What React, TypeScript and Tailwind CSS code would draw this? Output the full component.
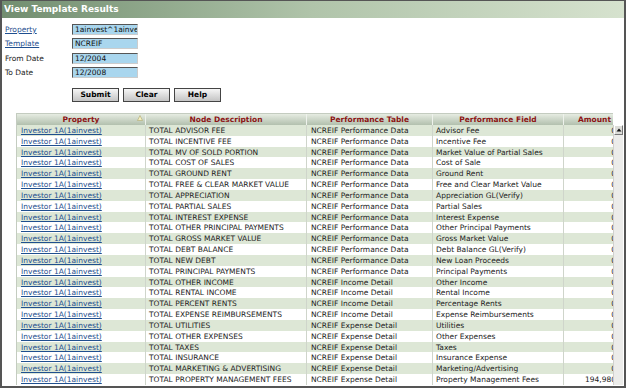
import { ReactNode } from "react";

type Row = {
  node: string;
  table: string;
  field: string;
  amount: string;
};

const rows: Row[] = [
  { node: "TOTAL ADVISOR FEE", table: "NCREIF Performance Data", field: "Advisor Fee", amount: "0" },
  { node: "TOTAL INCENTIVE FEE", table: "NCREIF Performance Data", field: "Incentive Fee", amount: "0" },
  { node: "TOTAL MV OF SOLD PORTION", table: "NCREIF Performance Data", field: "Market Value of Partial Sales", amount: "0" },
  { node: "TOTAL COST OF SALES", table: "NCREIF Performance Data", field: "Cost of Sale", amount: "0" },
  { node: "TOTAL GROUND RENT", table: "NCREIF Performance Data", field: "Ground Rent", amount: "0" },
  { node: "TOTAL FREE & CLEAR MARKET VALUE", table: "NCREIF Performance Data", field: "Free and Clear Market Value", amount: "0" },
  { node: "TOTAL APPRECIATION", table: "NCREIF Performance Data", field: "Appreciation GL(Verify)", amount: "0" },
  { node: "TOTAL PARTIAL SALES", table: "NCREIF Performance Data", field: "Partial Sales", amount: "0" },
  { node: "TOTAL INTEREST EXPENSE", table: "NCREIF Performance Data", field: "Interest Expense", amount: "0" },
  { node: "TOTAL OTHER PRINCIPAL PAYMENTS", table: "NCREIF Performance Data", field: "Other Principal Payments", amount: "0" },
  { node: "TOTAL GROSS MARKET VALUE", table: "NCREIF Performance Data", field: "Gross Market Value", amount: "0" },
  { node: "TOTAL DEBT BALANCE", table: "NCREIF Performance Data", field: "Debt Balance GL(Verify)", amount: "0" },
  { node: "TOTAL NEW DEBT", table: "NCREIF Performance Data", field: "New Loan Proceeds", amount: "0" },
  { node: "TOTAL PRINCIPAL PAYMENTS", table: "NCREIF Performance Data", field: "Principal Payments", amount: "0" },
  { node: "TOTAL OTHER INCOME", table: "NCREIF Income Detail", field: "Other Income", amount: "0" },
  { node: "TOTAL RENTAL INCOME", table: "NCREIF Income Detail", field: "Rental Income", amount: "0" },
  { node: "TOTAL PERCENT RENTS", table: "NCREIF Income Detail", field: "Percentage Rents", amount: "0" },
  { node: "TOTAL EXPENSE REIMBURSEMENTS", table: "NCREIF Income Detail", field: "Expense Reimbursements", amount: "0" },
  { node: "TOTAL UTILITIES", table: "NCREIF Expense Detail", field: "Utilities", amount: "0" },
  { node: "TOTAL OTHER EXPENSES", table: "NCREIF Expense Detail", field: "Other Expenses", amount: "0" },
  { node: "TOTAL TAXES", table: "NCREIF Expense Detail", field: "Taxes", amount: "0" },
  { node: "TOTAL INSURANCE", table: "NCREIF Expense Detail", field: "Insurance Expense", amount: "0" },
  { node: "TOTAL MARKETING & ADVERTISING", table: "NCREIF Expense Detail", field: "Marketing/Advertising", amount: "0" },
  { node: "TOTAL PROPERTY MANAGEMENT FEES", table: "NCREIF Expense Detail", field: "Property Management Fees", amount: "194,980" },
];

const cols = "grid grid-cols-[129px_161px_126px_131px_65px]";

const FormRow = ({ label, value, link }: { label: string; value: string; link?: boolean }) => (
  <div className="flex items-center h-[14.5px]">
    <div className="w-[67px]">
      {link ? (
        <a href="#" className="text-[#1f4f8f] underline">
          {label}
        </a>
      ) : (
        <span className="text-[#222]">{label}</span>
      )}
    </div>
    <div className="w-[66px] h-[11px] bg-[#a9d6ee] border-t border-l border-[#555] border-r border-b border-r-[#ccc] border-b-[#ccc] flex items-center pl-[2px] overflow-hidden whitespace-nowrap leading-none text-[#111]">
      {value}
    </div>
  </div>
);

const Btn = ({ children }: { children: ReactNode }) => (
  <button className="w-[47px] h-[14px] border border-[#444] bg-gradient-to-b from-[#f6f6f6] to-[#c4c4c4] font-bold text-[7.5px] text-black leading-none">
    {children}
  </button>
);

const HeadCell = ({ children, last }: { children: ReactNode; last?: boolean }) => (
  <div
    className={`flex items-center justify-center font-bold text-[#8c1414] ${
      last ? "" : "border-r border-[#eef2ec]"
    }`}
  >
    {children}
  </div>
);

export default function App() {
  return (
    <div className="w-[627px] h-[389px] bg-white font-['DejaVu_Sans',sans-serif] text-[7.5px] overflow-hidden">
      <div className="w-[626px] h-[388px] border-t border-l-2 border-r-2 border-b-2 border-[#555] flex flex-col overflow-hidden">
        {/* Title bar */}
        <div className="h-[17px] shrink-0 bg-gradient-to-r from-[#728e70] via-[#b0c4aa] to-[#d6e2ce] flex items-center pl-[2px]">
          <span className="text-white font-bold text-[9px] leading-none">View Template Results</span>
        </div>

        {/* Filters */}
        <div className="pl-[3px] pt-[4px] flex flex-col">
          <FormRow label="Property" value="1ainvest^1ainvest" link />
          <FormRow label="Template" value="NCREIF" link />
          <FormRow label="From Date" value="12/2004" />
          <FormRow label="To Date" value="12/2008" />
          <div className="flex gap-[4px] ml-[67px] mt-[8px]">
            <Btn>Submit</Btn>
            <Btn>Clear</Btn>
            <Btn>Help</Btn>
          </div>
        </div>

        {/* Results */}
        <div className="ml-[14px] mt-[11px] flex">
          <div className="w-[597px] overflow-hidden border-l border-[#c4ccc0]">
            <div className={`${cols} h-[12px] bg-gradient-to-b from-[#e6ece2] to-[#b2c0ae] border-t border-[#c4ccc0]`}>
              <HeadCell>
                <div className="relative w-full flex justify-center">
                  Property
                  <svg className="absolute right-[2px] top-[1px]" width="6" height="6" viewBox="0 0 6 6">
                    <path d="M3 0.5 L5.5 5.5 L0.5 5.5 Z" fill="#f4f0c0" stroke="#b0a870" strokeWidth="0.6" />
                  </svg>
                </div>
              </HeadCell>
              <HeadCell>Node Description</HeadCell>
              <HeadCell>Performance Table</HeadCell>
              <HeadCell>Performance Field</HeadCell>
              <div className="flex items-center pl-[14px] font-bold text-[#8c1414] whitespace-nowrap">Amount</div>
            </div>
            {rows.map((r, i) => (
              <div
                key={i}
                className={`${cols} h-[10.83px] items-center text-[#222] ${
                  i % 2 === 0 ? "bg-[#dde7d6]" : "bg-white"
                }`}
              >
                <div className="pl-[4px] h-full flex items-center border-r border-[#cfd5cb] whitespace-nowrap">
                  <a href="#" className="text-[#1f4f8f] underline">
                    Investor 1A(1ainvest)
                  </a>
                </div>
                <div className="pl-[3px] h-full flex items-center border-r border-[#cfd5cb] whitespace-nowrap overflow-hidden">
                  {r.node}
                </div>
                <div className="pl-[4px] h-full flex items-center border-r border-[#cfd5cb] whitespace-nowrap overflow-hidden">
                  {r.table}
                </div>
                <div className="pl-[3px] h-full flex items-center border-r border-[#cfd5cb] whitespace-nowrap overflow-hidden">
                  {r.field}
                </div>
                <div className="h-full flex items-center justify-end pr-[13px] whitespace-nowrap">{r.amount}</div>
              </div>
            ))}
          </div>

          {/* Scrollbar */}
          <div className="w-[10px] mt-[12px] flex flex-col bg-[#e4e4e2] border-l border-[#d0d0ce]">
            <div className="h-[10px] bg-[#dcdcd8] border border-t-white border-l-white border-r-[#777] border-b-[#777] flex items-center justify-center">
              <svg width="6" height="4" viewBox="0 0 6 4">
                <path d="M3 0.5 L5.5 3.5 L0.5 3.5 Z" fill="#111" />
              </svg>
            </div>
            <div className="flex-1 bg-[#ececea]" />
          </div>
        </div>
      </div>
    </div>
  );
}
